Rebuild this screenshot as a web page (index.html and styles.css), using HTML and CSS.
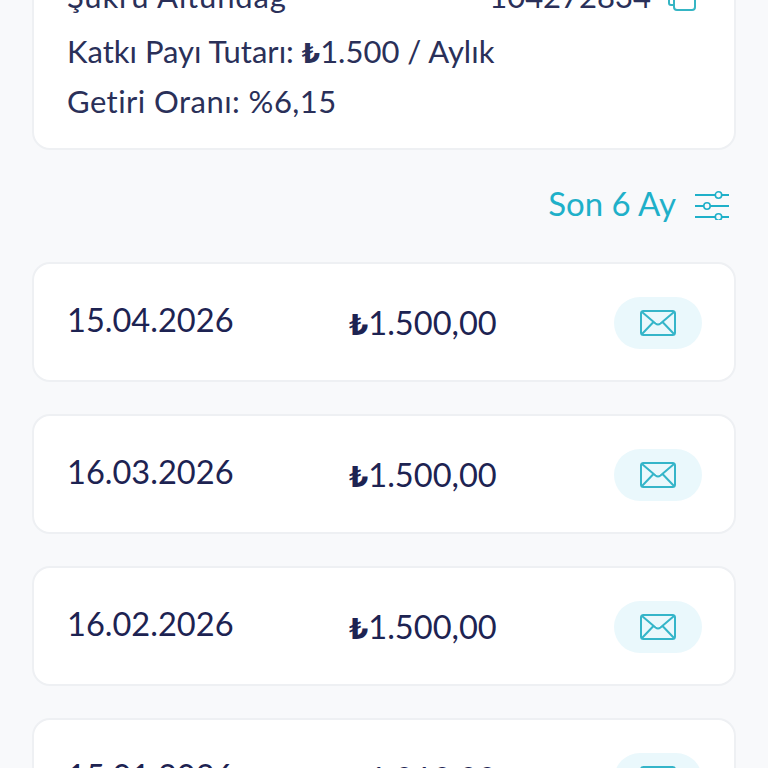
FILE: index.html
```html
<!DOCTYPE html>
<html lang="tr">
<head>
<meta charset="utf-8">
<title>Katkı Payı</title>
<link rel="stylesheet" href="styles.css">
</head>
<body>
<main class="screen">
  <section class="summary">
    <div class="summary-head">
      <span class="name">Şükrü Altundağ</span>
      <span class="policy">
        104272834
        <svg class="copy" viewBox="0 0 30 30" fill="none" stroke="#35b5c4" stroke-width="2"><path d="M6 4H4a2 2 0 0 0-2 2v14a2 2 0 0 0 2 2h3"/><rect x="7" y="2" width="21" height="25" rx="3"/></svg>
      </span>
    </div>
    <p class="line"><span>Katkı Payı Tutarı: <b class="tl">₺</b>1.500 / Aylık</span></p>
    <p class="line rate"><span>Getiri Oranı: %6,15</span></p>
  </section>

  <div class="filter">
    <span class="filter-label">Son 6 Ay</span>
    <svg class="sliders" width="36" height="30" viewBox="0 0 36 30" fill="none" stroke="#1fb0c9" stroke-width="1.6"><path d="M1 5h20M28 5h7M1 16h9M16 16h19M1 27h20M28 27h7" stroke-width="2"/><circle cx="24.500" cy="5" r="3.200"/><circle cx="13" cy="16" r="3.200"/><circle cx="24.500" cy="27" r="3.200"/></svg>
  </div>

  <ul class="rows">
    <li class="row"><span class="date">15.04.2026</span><span class="amount"><b class="tl">₺</b>1.500,00</span><button class="mail"><svg width="36" height="26" viewBox="0 0 36 26" fill="none" stroke="#35b5c9" stroke-width="2"><rect x="1" y="1" width="34" height="24" rx="2.500"/><path d="M2 2l13.500 11.500q2.500 2 5 0L34 2M2 24l11-11.500M34 24L23 12.500"/></svg></button></li>
    <li class="row"><span class="date">16.03.2026</span><span class="amount"><b class="tl">₺</b>1.500,00</span><button class="mail"><svg width="36" height="26" viewBox="0 0 36 26" fill="none" stroke="#35b5c9" stroke-width="2"><rect x="1" y="1" width="34" height="24" rx="2.500"/><path d="M2 2l13.500 11.500q2.500 2 5 0L34 2M2 24l11-11.500M34 24L23 12.500"/></svg></button></li>
    <li class="row"><span class="date">16.02.2026</span><span class="amount"><b class="tl">₺</b>1.500,00</span><button class="mail"><svg width="36" height="26" viewBox="0 0 36 26" fill="none" stroke="#35b5c9" stroke-width="2"><rect x="1" y="1" width="34" height="24" rx="2.500"/><path d="M2 2l13.500 11.500q2.500 2 5 0L34 2M2 24l11-11.500M34 24L23 12.500"/></svg></button></li>
    <li class="row"><span class="date">15.01.2026</span><span class="amount"><b class="tl">₺</b>1.010,00</span><button class="mail"><svg width="36" height="26" viewBox="0 0 36 26" fill="none" stroke="#35b5c9" stroke-width="2"><rect x="1" y="1" width="34" height="24" rx="2.500"/><path d="M2 2l13.500 11.500q2.500 2 5 0L34 2M2 24l11-11.500M34 24L23 12.500"/></svg></button></li>
  </ul>
</main>
</body>
</html>
```
FILE: styles.css
```css
html, body {
  margin: 0;
  height: 768px;
  overflow: hidden;
  background: #f8f9fb;
}
.screen {
  margin-top: -50px;
  padding: 0 32px;
  font-family: "Lato", "Liberation Sans", sans-serif;
  color: #2a3059;
}
.summary {
  box-sizing: border-box;
  height: 200px;
  padding: 19px 33px 0;
  background: #fff;
  border: 2px solid #eef0f3;
  border-radius: 18px;
  font-size: 31px;
  line-height: 50px;
}
.summary-head {
  display: flex;
  justify-content: space-between;
  margin-bottom: 5px;
  padding-right: 4px;
}
.name {
  letter-spacing: 0.85px;
}
.rate {
  letter-spacing: 0.45px;
}
.policy {
  display: flex;
  align-items: center;
  gap: 16px;
}
.copy {
  width: 30px;
  height: 30px;
  margin-top: 4px;
}
.line {
  margin: 0;
}
.tl {
  font-family: "DejaVu Sans", sans-serif;
  font-weight: 700;
  font-size: 0.85em;
  line-height: 0;
}
.filter {
  display: flex;
  justify-content: flex-end;
  align-items: center;
  gap: 18px;
  height: 30px;
  margin: 40px 6px 42px 0;
  color: #1fb0c9;
  font-size: 33px;
}
.filter-label {
  padding-bottom: 4px;
}
.rows {
  list-style: none;
  margin: 0;
  padding: 0;
  display: flex;
  flex-direction: column;
  gap: 32px;
}
.row {
  box-sizing: border-box;
  height: 120px;
  display: grid;
  grid-template-columns: 282px 1fr 88px;
  align-items: center;
  padding: 0 32px 0 33px;
  background: #fff;
  border: 2px solid #eef0f3;
  border-radius: 18px;
  color: #1d2352;
  font-size: 32.6px;
}
.date {
  position: relative;
  top: -3px;
}
.mail {
  display: flex;
  align-items: center;
  justify-content: center;
  width: 88px;
  height: 52px;
  margin-top: 2px;
  padding: 0;
  border: 0;
  border-radius: 26px;
  background: #eaf8fc;
}
```
